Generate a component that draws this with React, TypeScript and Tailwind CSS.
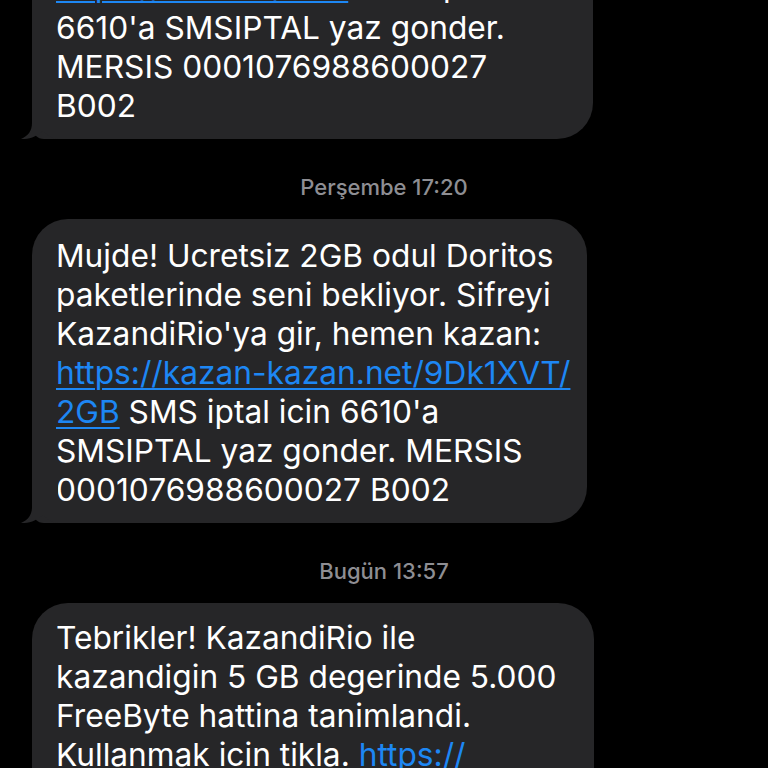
const FONT = "font-['Inter','Liberation_Sans',sans-serif]";

function Tail() {
  return (
    <svg
      className="absolute left-[-14px] bottom-0"
      width="40"
      height="40"
      viewBox="0 0 40 40"
    >
      <path
        d="M14 0 L14 24 C14 32 10 37 3 40 C12 40.5 19 37 25 32 C29 36 33 39 40 40 L40 0 Z"
        fill="#262628"
      />
    </svg>
  );
}

function Link({ children }: { children: React.ReactNode }) {
  return (
    <span className="text-[#1d87f4] underline decoration-2 underline-offset-[4px]">
      {children}
    </span>
  );
}

function Bubble({
  width,
  className = "pt-[17px]",
  tail = true,
  children,
}: {
  width: string;
  className?: string;
  tail?: boolean;
  children: React.ReactNode;
}) {
  return (
    <div
      className={`relative ml-[32px] ${width} rounded-[36px] rounded-bl-[12px] bg-[#262628] pl-[24px] pb-[14px] text-white text-[31.7px] leading-[39px] ${className}`}
    >
      {children}
      {tail && <Tail />}
    </div>
  );
}

function Stamp({ day, time }: { day: string; time: string }) {
  return (
    <div className="mt-[36px] mb-[20px] text-center text-[22px] leading-[24px] text-[#8e8e93] font-medium">
      {day} {time}
    </div>
  );
}

export default function App() {
  return (
    <div className={`w-[768px] h-[768px] overflow-hidden bg-black ${FONT}`}>
      <Bubble width="w-[561px]" className="pt-[17px] mt-[-48px]">
        {/* line scrolled mostly out of view */}
        <div className="relative top-[-3px] whitespace-nowrap">
          <Link>https://kzn.net/2GB</Link> SMS iptal icin
        </div>
        <div className="whitespace-nowrap">6610'a SMSIPTAL yaz gonder.</div>
        <div className="whitespace-nowrap">MERSIS 0001076988600027</div>
        <div className="whitespace-nowrap">B002</div>
      </Bubble>

      <Stamp day="Perşembe" time="17:20" />

      <Bubble width="w-[555px]">
        <div className="whitespace-nowrap">Mujde! Ucretsiz 2GB odul Doritos</div>
        <div className="whitespace-nowrap">paketlerinde seni bekliyor. Sifreyi</div>
        <div className="whitespace-nowrap">KazandiRio'ya gir, hemen kazan:</div>
        <div className="whitespace-nowrap">
          <Link>https://kazan-kazan.net/9Dk1XVT/</Link>
        </div>
        <div className="whitespace-nowrap">
          <Link>2GB</Link> SMS iptal icin 6610'a
        </div>
        <div className="whitespace-nowrap">SMSIPTAL yaz gonder. MERSIS</div>
        <div className="whitespace-nowrap">0001076988600027 B002</div>
      </Bubble>

      <Stamp day="Bugün" time="13:57" />

      <Bubble width="w-[562px]" tail={false} className="pt-[15px]">
        <div className="whitespace-nowrap">Tebrikler! KazandiRio ile</div>
        <div className="whitespace-nowrap">kazandigin 5 GB degerinde 5.000</div>
        <div className="whitespace-nowrap">FreeByte hattina tanimlandi.</div>
        <div className="whitespace-nowrap">
          Kullanmak icin tikla. <Link>https://</Link>
        </div>
        <div className="whitespace-nowrap">kazan-kazan.net/5GB</div>
      </Bubble>
    </div>
  );
}
